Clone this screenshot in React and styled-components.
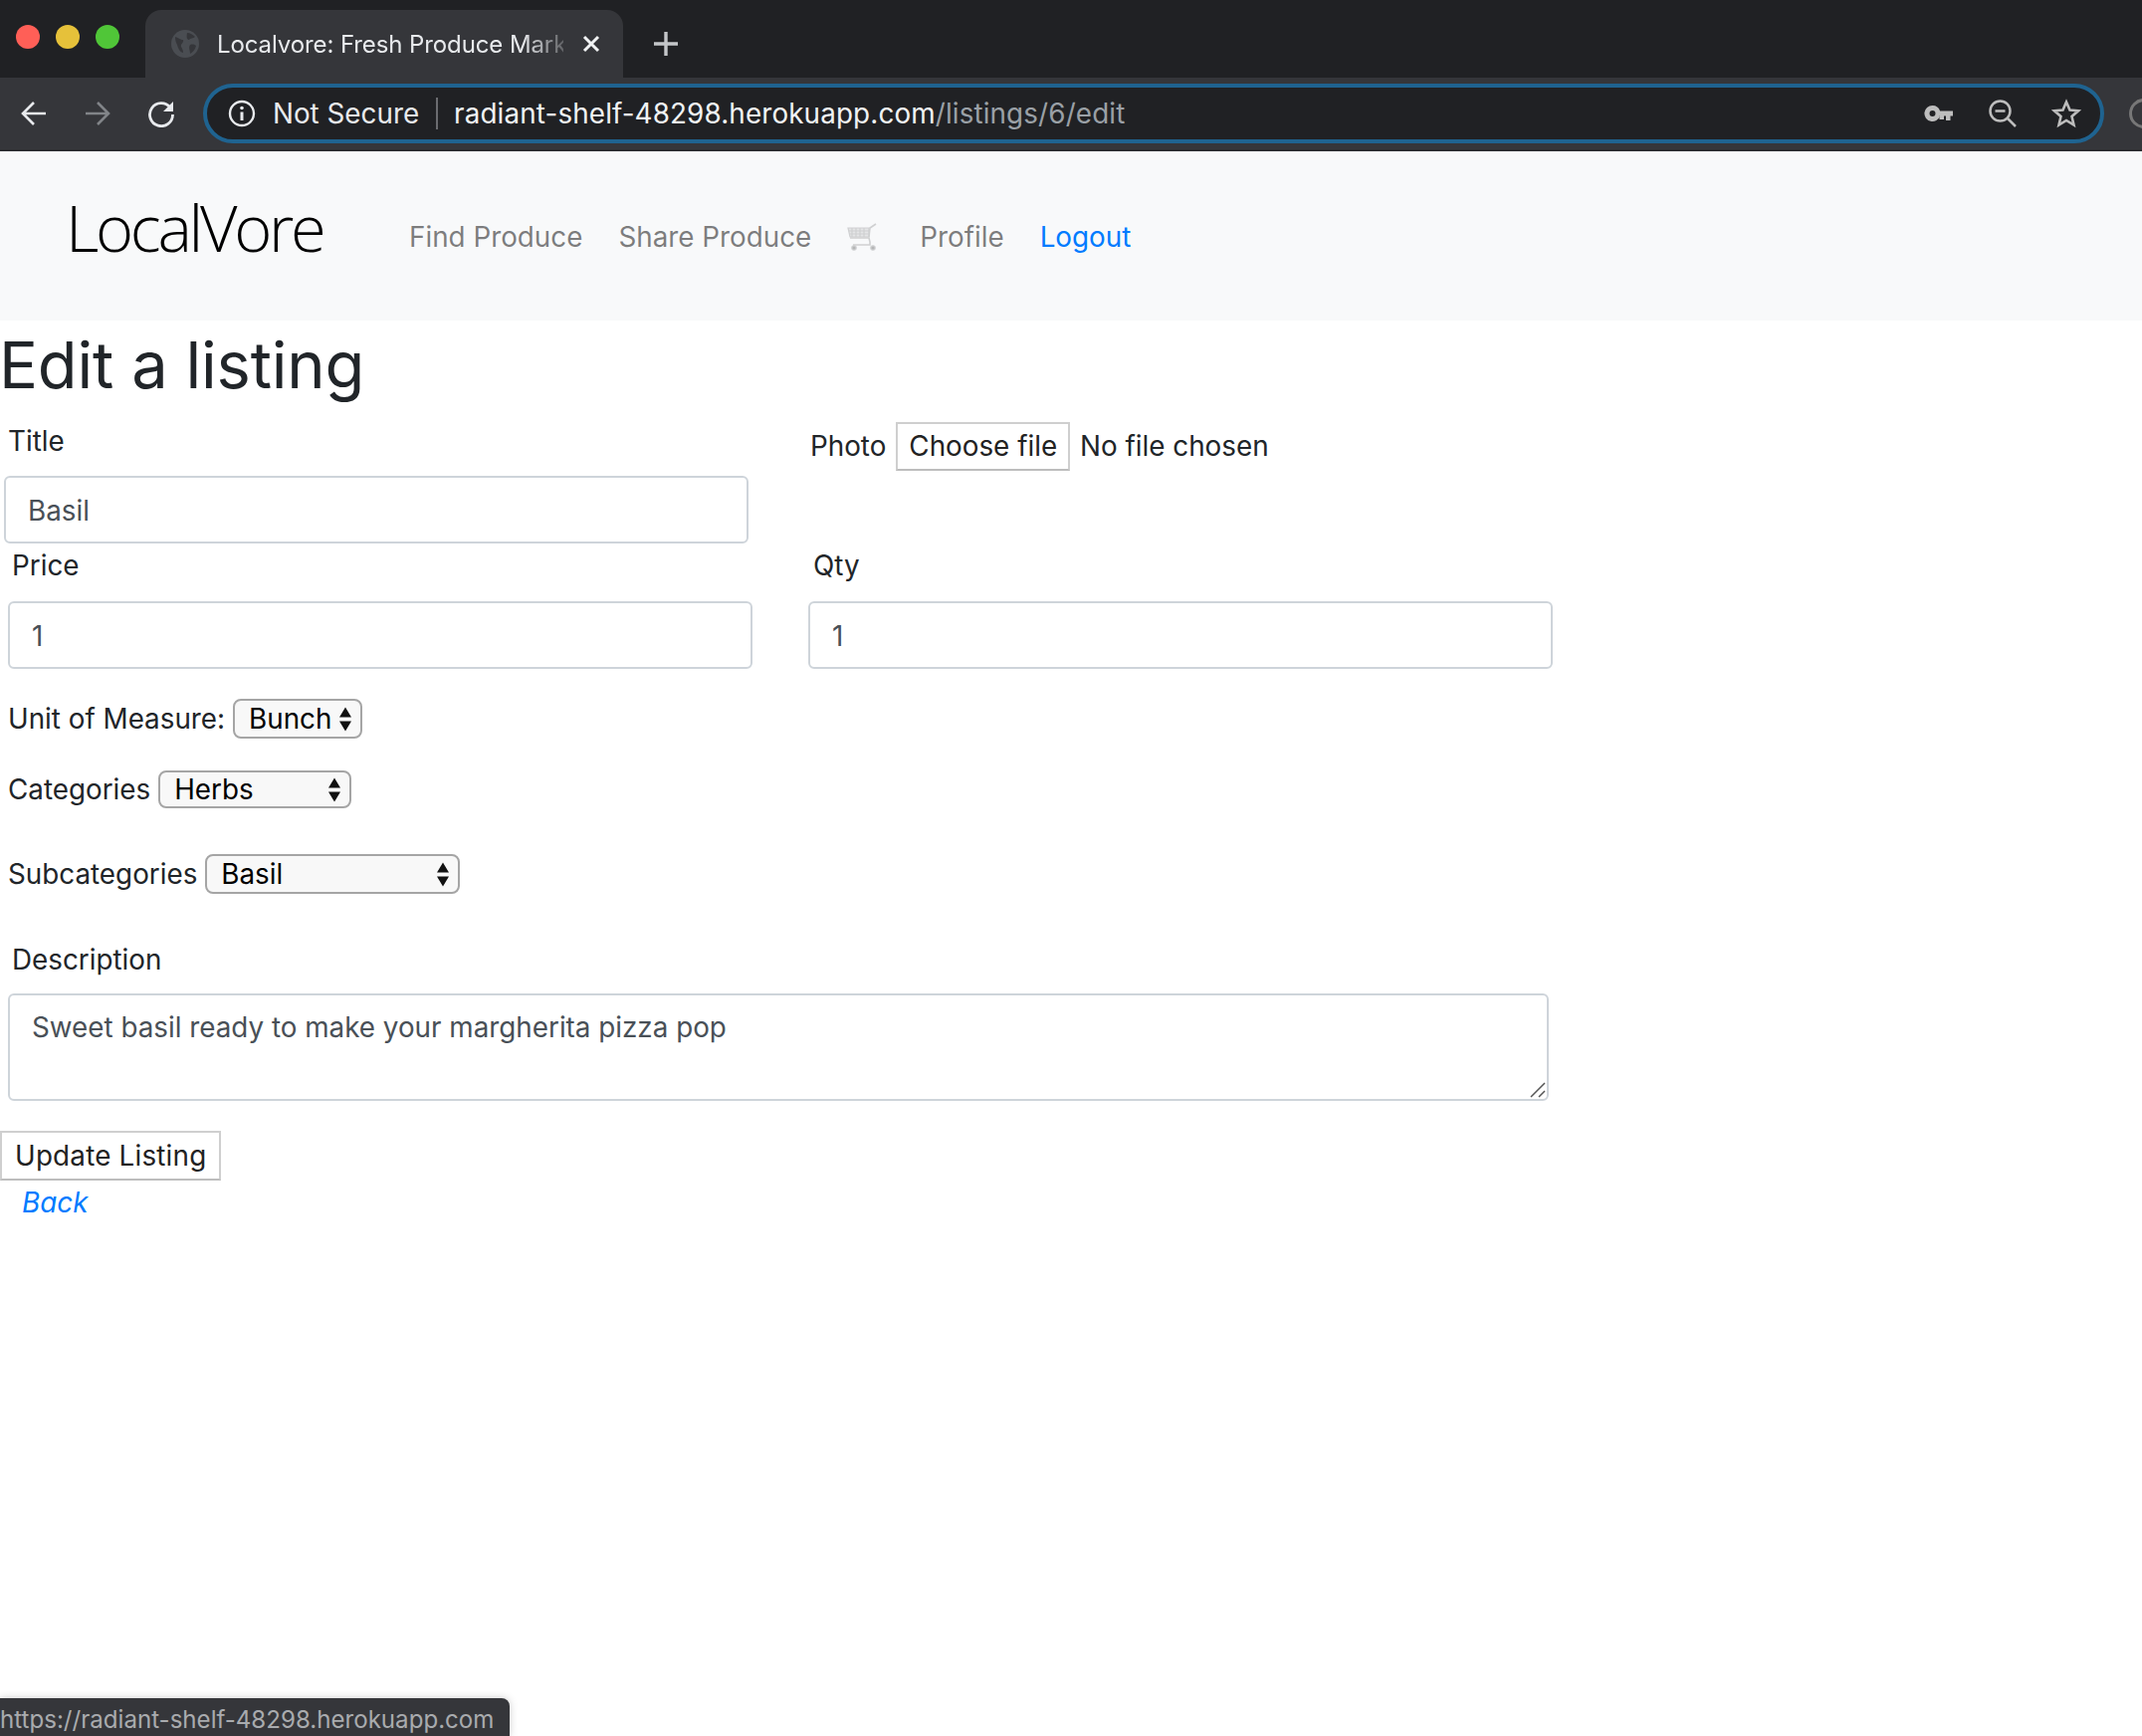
import React from "react";
import styled, { createGlobalStyle } from "styled-components";

const Global = createGlobalStyle`
  html, body { margin: 0; padding: 0; background: #fff; }
  body { font-family: Inter, "Liberation Sans", sans-serif; color: #212529; }
  * { box-sizing: border-box; }
`;
const Page = styled.div`position: relative; width: 2152px; height: 1744px; overflow: hidden; background: #fff;`;
const TabStrip = styled.div`height: 78px; background: #202124; display: flex; align-items: flex-end;`;
const Lights = styled.div`width: 146px; height: 78px; padding: 25px 0 0 16px; display: flex; gap: 16px; align-items: flex-start;`;
const Light = styled.span`width: 24px; height: 24px; border-radius: 50%; background: ${p => p.$c};`;
const Tab = styled.div`
  width: 480px; height: 68px; background: #35363a; border-radius: 16px 16px 0 0;
  display: flex; align-items: center; padding: 0 20px 0 26px; color: #e8eaed; font-size: 24px; gap: 18px; margin-top: 10px;
`;
const TabTitle = styled.span`
  width: 348px; white-space: nowrap; letter-spacing: -.1px;
  -webkit-mask-image: linear-gradient(90deg, #000 88%, rgba(0,0,0,.25) 100%); mask-image: linear-gradient(90deg, #000 88%, rgba(0,0,0,.25) 100%);
`;
const NewTab = styled.div`margin-left: 30px; height: 68px; display: flex; align-items: center;`;
const Toolbar = styled.div`height: 74px; background: #35363a; display: flex; align-items: center; padding: 0 0 0 20px; border-bottom: 2px solid #2b2c2f;`;
const NavIcon = styled.div`width: 28px; height: 28px; margin-right: ${p => p.$mr || 36}px;`;
const Omnibox = styled.div`
  width: 1910px; flex: none; height: 60px; margin-left: -9px; border: 4px solid #1f6390; border-radius: 30px; background: #202124;
  display: flex; align-items: center; padding: 0 19px 0 21px; color: #e8eaed; font-size: 27.8px;
`;
const NotSecure = styled.span`margin-left: 17px;`;
const Divider = styled.span`width: 2px; height: 32px; background: #6b6c70; margin: 0 16px 0 17px;`;
const Host = styled.span`color: #f1f3f4; letter-spacing: .14px;`;
const UrlPath = styled.span`color: #9aa0a6; letter-spacing: .14px;`;
const OmniRight = styled.div`margin-left: auto; display: flex; align-items: center; gap: 35px;`;
const Avatar = styled.div`width: 30px; height: 30px; border: 3px solid #777; border-radius: 50%; margin-left: 25px; flex: none;`;

const Nav = styled.nav`height: 170px; background: #f8f9fa; display: flex; align-items: center; padding: 2px 0 0 66px;`;
const Brand = styled.a`
  font-family: "Open Sans", sans-serif; font-weight: 300; font-size: 65px; color: #000; width: 345px; letter-spacing: -3.3px;
  display: inline-block; white-space: nowrap; margin-bottom: 20px;
`;
const NavLink = styled.a`font-size: 27.8px; color: ${p => p.$active ? "#007bff" : "rgba(0,0,0,.5)"}; margin-right: 36px; white-space: nowrap;`;
const CartSlot = styled.span`display: inline-flex; width: 32px; margin-right: 41px;`;

const Heading = styled.h1`margin: 0 0 0 -1px; font-size: 65px; font-weight: 420; line-height: 90px; height: 101px; letter-spacing: -.2px;`;
const Row = styled.div`display: flex; align-items: flex-start; padding-left: ${p => p.$pl || 0}px; height: ${p => p.$h}px;`;
const Col = styled.div`width: ${p => p.$w}px; margin-left: ${p => p.$ml || 0}px; flex: none;`;
const Label = styled.label`display: block; font-size: 27.8px; line-height: 40px; margin: ${p => p.$m || "0"};`;
const TextInput = styled.div`
  height: 68px; width: 748px; border: 2px solid #ced4da; border-radius: 6px; background: #fff; color: #495057;
  font-size: 27.8px; line-height: 66px; padding: 0 22px; margin-top: ${p => p.$mt || 15}px;
`;
const FileRow = styled.div`display: flex; align-items: center; font-size: 27.8px; height: 50px;`;
const PlainButton = styled.button`
  display: ${p => p.$block ? "block" : "inline-block"}; margin: ${p => p.$m || "0"};
  font-family: inherit; font-size: 27.8px; color: #222; background: #fff; border: 2px solid #cfcfcf; border-bottom-color: #bdbdbd;
  height: ${p => p.$h || 50}px; padding: 0 ${p => p.$px || 13}px; border-radius: 0; white-space: nowrap; letter-spacing: ${p => p.$ls || 0}px;
`;
const NoFile = styled.span`margin-left: 10px;`;
const InlineField = styled.div`display: flex; align-items: center; padding-left: 8px; height: ${p => p.$h}px; margin-top: ${p => p.$mt || 0}px; font-size: 27.8px; gap: 8px;`;
const SelectBox = styled.div`
  width: ${p => p.$w}px; height: ${p => p.$sh || 40}px; border: 2px solid #a5a5a5; border-radius: 8px; background: #f8f8f8;
  display: flex; align-items: center; justify-content: space-between; padding: 0 8px 0 14px; color: #000; font-size: 27.8px;
`;
const TextArea = styled.div`
  position: relative; width: 1548px; height: 108px; margin: 14px 0 0 8px; border: 2px solid #ced4da; border-radius: 6px;
  color: #495057; font-size: 27.8px; line-height: 40px; padding: 12px 22px;
`;
const Grip = styled.svg`position: absolute; right: 1px; bottom: 1px;`;
const BackLink = styled.a`display: block; margin-left: 22px; font-style: italic; color: #007bff; font-size: 27.8px; line-height: 44px;`;
const StatusBar = styled.div`
  position: absolute; left: 0; bottom: 0; width: 512px; height: 38px; background: #35363a; border-radius: 0 8px 0 0;
  color: #a9abae; font-size: 24.1px; line-height: 44px; white-space: nowrap; box-shadow: 0 0 8px rgba(0,0,0,.2);
`;

const Arrow = ({ c, flip }) => (
  <svg width="28" height="28" viewBox="0 0 28 28" fill="none" stroke={c} strokeWidth="2.6" style={flip ? { transform: "scaleX(-1)" } : undefined}>
    <path d="M26 14H3M14 3 3 14l11 11" />
  </svg>
);
const Arrows = () => (
  <svg width="14" height="27" viewBox="0 0 14 26"><path d="M7 1 13 11H1zM7 25 1 15h12z" fill="#111" /></svg>
);

export default function App() {
  return (
    <Page>
      <Global />
      <TabStrip>
        <Lights>
          <Light $c="#ff5f57" /><Light $c="#e6c13a" /><Light $c="#50c638" />
        </Lights>
        <Tab>
          <svg width="28" height="28" viewBox="0 0 28 28" style={{ flex: "none" }}>
            <circle cx="14" cy="14" r="14" fill="#4a4d52" />
            <path d="M4 7c4 1 5 3 8 3 1 3-3 4-2 7 1 2 2 3 2 6-4-1-5-5-6-8-1-2-2-4-2-8zM16 3c3 0 6 2 8 4-2 2-5 1-6 3-2 0-3-2-2-7zM19 15c3-1 5 0 6 1-1 4-3 6-6 8 0-4-2-6 0-9z" fill="#35363a" />
          </svg>
          <TabTitle>Localvore: Fresh Produce Mark</TabTitle>
          <svg width="18" height="18" viewBox="0 0 18 18" stroke="#f1f3f4" strokeWidth="3" style={{ flex: "none", marginLeft: 1 }}><path d="M2 2 16 16M16 2 2 16" /></svg>
        </Tab>
        <NewTab>
          <svg width="26" height="26" viewBox="0 0 26 26" stroke="#c4c6c9" strokeWidth="3.4"><path d="M13 1v24M1 13h24" /></svg>
        </NewTab>
      </TabStrip>
      <Toolbar>
        <NavIcon $mr={36}><Arrow c="#e8eaed" /></NavIcon>
        <NavIcon $mr={36}><Arrow c="#818488" flip /></NavIcon>
        <NavIcon $mr={37}>
          <svg width="28" height="28" viewBox="0 0 28 28" fill="none">
            <path d="M23 8A11.5 11.5 0 1 0 25.5 15" stroke="#e8eaed" strokeWidth="2.8" />
            <path d="M26 2v10H16z" fill="#e8eaed" />
          </svg>
        </NavIcon>
        <Omnibox>
          <svg width="28" height="28" viewBox="0 0 28 28" fill="none" style={{ flex: "none" }}>
            <circle cx="14" cy="14" r="12" stroke="#e8eaed" strokeWidth="2.4" />
            <path d="M14 12.5V21" stroke="#e8eaed" strokeWidth="3" /><circle cx="14" cy="8.5" r="1.8" fill="#e8eaed" />
          </svg>
          <NotSecure>Not Secure</NotSecure>
          <Divider />
          <Host>radiant-shelf-48298.herokuapp.com</Host><UrlPath>/listings/6/edit</UrlPath>
          <OmniRight>
            <svg width="30" height="18" viewBox="0 0 30 18">
              <path fillRule="evenodd" d="M8.5 1a8 8 0 0 1 7.6 5.5H29v5h-2.500V16H22v-4.500h-2V15h-4.500v-3.500H16A8 8 0 1 1 8.500 1zm0 5a3 3 0 1 0 0 6 3 3 0 0 0 0-6z" fill="#bdbdbd" />
            </svg>
            <svg width="28" height="28" viewBox="0 0 28 28" fill="none" stroke="#bdbdbd" strokeWidth="2.5">
              <circle cx="11.500" cy="11.500" r="10" /><path d="M6.500 11.500h10M18.500 18.500 27 27" />
            </svg>
            <svg width="30" height="30" viewBox="0 0 30 30" fill="none" stroke="#bdbdbd" strokeWidth="2.6">
              <path d="M15 3.500 18.500 11.500 27 12.300 20.500 18 22.500 26.500 15 22 7.500 26.500 9.500 18 3 12.300 11.500 11.500z" />
            </svg>
          </OmniRight>
        </Omnibox>
        <Avatar />
      </Toolbar>

      <Nav>
        <Brand>LocalVore</Brand>
        <NavLink>Find Produce</NavLink>
        <NavLink>Share Produce</NavLink>
        <CartSlot>
          <svg width="32" height="28" viewBox="0 0 32 28" fill="none" stroke="#cfd0d1" strokeWidth="1.200">
            <path d="M1 5h21v9H3z" fill="#e4e5e6" />
            <path d="M5 5v9M9 5v9M13 5v9M17 5v9M2 8h20M2.500 11h19" />
            <path d="M22 14l1-9 6-4M3 15h19l1 4v3H6" strokeWidth="1.600" />
            <circle cx="7" cy="25" r="2.200" fill="#b5b6b7" /><circle cx="26" cy="25" r="2.200" fill="#b5b6b7" />
          </svg>
        </CartSlot>
        <NavLink>Profile</NavLink>
        <NavLink $active>Logout</NavLink>
      </Nav>

      <Heading>Edit a listing</Heading>
      <Row $h={123} $pl={4}>
        <Col $w={748}>
          <Label $m="0 0 0 4px">Title</Label>
          <TextInput>Basil</TextInput>
        </Col>
        <Col $w={600} $ml={62}>
          <FileRow>
            Photo<PlainButton $m="0 0 0 10px" $px={11} $h={49}>Choose file</PlainButton>
            <NoFile>No file chosen</NoFile>
          </FileRow>
        </Col>
      </Row>
      <Row $h={156} $pl={8}>
        <Col $w={748}>
          <Label $m="2px 0 0 4px">Price</Label>
          <TextInput $mt={16}>1</TextInput>
        </Col>
        <Col $w={748} $ml={56}>
          <Label $m="2px 0 0 5px">Qty</Label>
          <TextInput $mt={16}>1</TextInput>
        </Col>
      </Row>
      <InlineField $h={40}>Unit of Measure:<SelectBox $w={130}>Bunch<Arrows /></SelectBox></InlineField>
      <InlineField $h={38} $mt={32}>Categories<SelectBox $w={194} $sh={38}>Herbs<Arrows /></SelectBox></InlineField>
      <InlineField $h={40} $mt={46}>Subcategories<SelectBox $w={256}>Basil<Arrows /></SelectBox></InlineField>
      <Label $m="46px 0 0 12px">Description</Label>
      <TextArea>
        Sweet basil ready to make your margherita pizza pop
        <Grip width="16" height="16" viewBox="0 0 16 16" stroke="#555" strokeWidth="1.500"><path d="M1 15 15 1M9 15l6-6" /></Grip>
      </TextArea>
      <PlainButton $block $m="30px 0 0" $ls={0.2}>Update Listing</PlainButton>
      <BackLink>Back</BackLink>
      <StatusBar>https://radiant-shelf-48298.herokuapp.com</StatusBar>
    </Page>
  );
}
